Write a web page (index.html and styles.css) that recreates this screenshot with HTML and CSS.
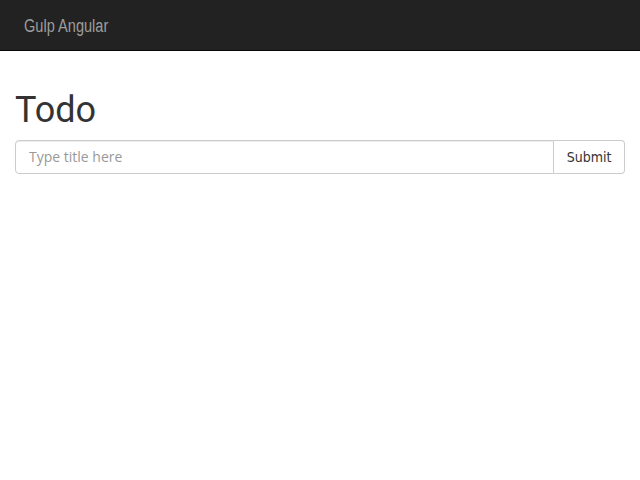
FILE: index.html
```html
<!DOCTYPE html>
<html>
<head>
<meta charset="utf-8">
<link rel="stylesheet" href="styles.css">
</head>
<body>
<nav class="navbar">
  <span class="brand">Gulp Angular</span>
</nav>
<main class="content">
  <h1 class="title">Todo</h1>
  <form class="input-group">
    <input class="field" type="text" placeholder="Type title here">
    <button class="btn" type="button">Submit</button>
  </form>
</main>
</body>
</html>
```
FILE: styles.css
```css
* { box-sizing: border-box; }
html, body { margin: 0; padding: 0; background: #fff; }
body { font-family: "DejaVu Sans", sans-serif; font-stretch: condensed; font-size: 14px; color: #333; }
.navbar {
  height: 51px;
  background: #222;
  border-bottom: 1px solid #080808;
  display: flex;
  align-items: center;
  padding-left: 24px;
  padding-top: 3px;
}
.brand {
  font-family: "Liberation Sans", Arial, sans-serif;
  font-stretch: normal;
  font-size: 18px;
  color: #9d9d9d;
  display: inline-block;
  transform: scaleX(0.81);
  transform-origin: left center;
}
.content { padding: 40px 15px 0; }
.title {
  font-family: Roboto, sans-serif;
  font-stretch: normal;
  font-size: 36px;
  font-weight: 400;
  line-height: 1.1;
  margin: 0 0 9px;
  color: #333;
}
.input-group { display: flex; margin: 0; }
.field {
  flex: 1;
  height: 34px;
  padding: 6px 13px;
  font-family: "Open Sans", sans-serif;
  font-stretch: normal;
  font-size: 14px;
  color: #555;
  border: 1px solid #ccc;
  border-radius: 4px 0 0 4px;
  box-shadow: inset 0 1px 1px rgba(0,0,0,.075);
  outline: none;
}
.field::placeholder { color: #999; }
.btn {
  height: 34px;
  padding: 6px 12px;
  font-family: "DejaVu Sans", sans-serif;
  font-stretch: condensed;
  font-size: 14px;
  color: #333;
  background: #fff;
  border: 1px solid #ccc;
  border-left: 0;
  border-radius: 0 4px 4px 0;
  width: 71px;
}
```
